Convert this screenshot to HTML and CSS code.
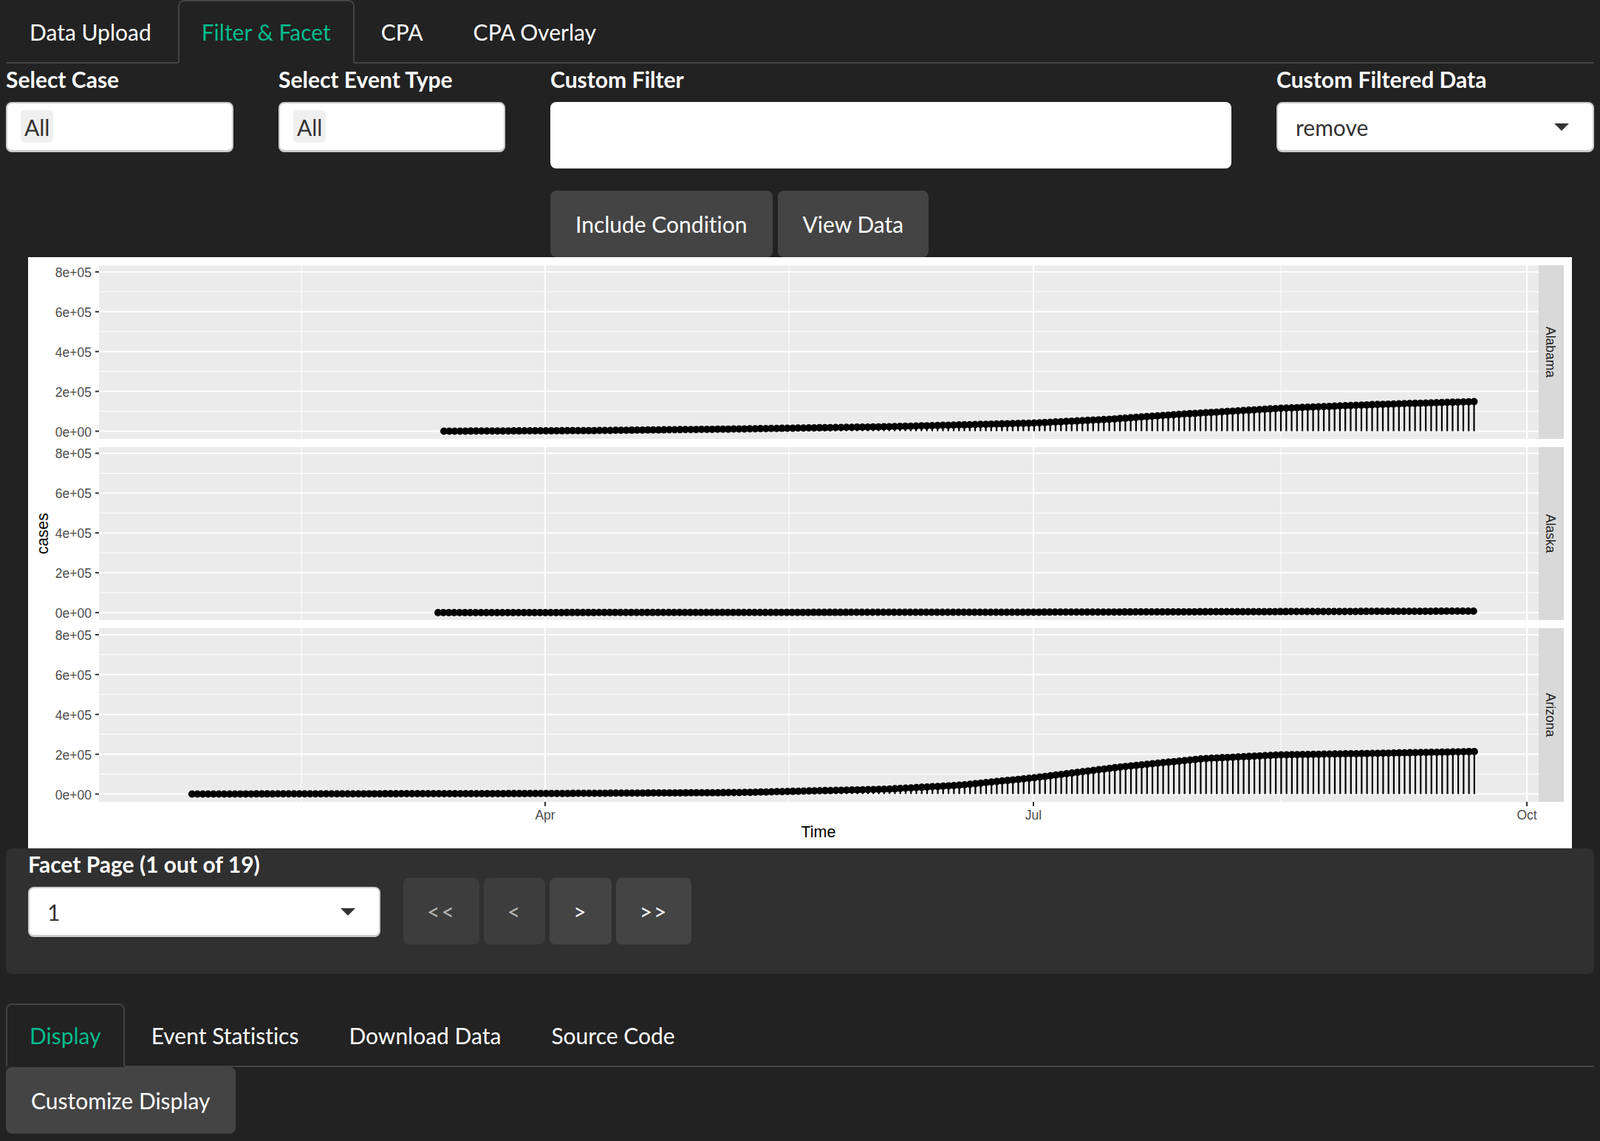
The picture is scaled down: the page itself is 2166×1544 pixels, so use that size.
FILE: index.html
```html
<!DOCTYPE html>
<html lang="en">

<head>
    <meta charset="UTF-8">
    <title>Event Explorer</title>
    <link rel="stylesheet" href="styles.css">
</head>

<body>
    <nav class="tabs">
        <a class="tab" href="#">Data Upload</a>
        <a class="tab active" href="#">Filter &amp; Facet</a>
        <a class="tab" href="#">CPA</a>
        <a class="tab" href="#">CPA Overlay</a>
    </nav>

    <div class="filters">
        <div>
            <label class="field-label">Select Case</label>
            <div class="input-box"><span class="chip">All</span></div>
        </div>
        <div>
            <label class="field-label">Select Event Type</label>
            <div class="input-box"><span class="chip">All</span></div>
        </div>
        <div>
            <label class="field-label">Custom Filter</label>
            <div class="text-box"></div>
            <div class="filter-actions">
                <button class="btn">Include Condition</button>
                <button class="btn">View Data</button>
            </div>
        </div>
        <div>
            <label class="field-label">Custom Filtered Data</label>
            <div class="input-box select-box">remove<span class="caret"></span></div>
        </div>
    </div>

    <div class="plot-wrap">
        <svg id="plot" class="plot" viewBox="38 348 2090 800" width="2090" height="800"></svg>
    </div>

    <div class="well">
        <div class="page-select">
            <label class="field-label">Facet Page (1 out of 19)</label>
            <div class="input-box select-box">1<span class="caret"></span></div>
        </div>
        <div class="pager">
            <button class="btn btn-page" disabled>&lt;&lt;</button>
            <button class="btn btn-page" disabled>&lt;</button>
            <button class="btn btn-page">&gt;</button>
            <button class="btn btn-page">&gt;&gt;</button>
        </div>
    </div>

    <nav class="tabs tabs-lower">
        <a class="tab active" href="#">Display</a>
        <a class="tab" href="#">Event Statistics</a>
        <a class="tab" href="#">Download Data</a>
        <a class="tab" href="#">Source Code</a>
    </nav>
    <button class="btn">Customize Display</button>

    <script src="script.js"></script>
</body>

</html>
```

FILE: styles.css
```css
html,
body {
    height: 1544px;
    overflow: hidden;
}

body {
    font-family: 'Lato', sans-serif;
    font-size: 30px;
    line-height: 43px;
    font-variant-ligatures: none;
    background-color: #222;
    color: #fff;
    margin: 0;
    padding: 0 8px;
}

.tabs {
    display: flex;
    gap: 4px;
    height: 84px;
    border-bottom: 2px solid #444;
}

.tab {
    color: #fff;
    text-decoration: none;
    padding: 20px 30px;
    height: 84px;
    box-sizing: border-box;
    border: 2px solid transparent;
    border-radius: 8px 8px 0 0;
}

.tab.active {
    color: #00bc8c;
    background-color: #222;
    border-color: #444;
    border-bottom-color: #222;
    height: 86px;
}

.filters {
    display: grid;
    grid-template-columns: 308px 307px 922px 430px;
    column-gap: 61px;
}

.field-label {
    display: block;
    font-weight: 700;
    margin-bottom: 9px;
}

.input-box {
    box-sizing: border-box;
    height: 68px;
    padding: 9px 18px 0;
    background-color: #fff;
    border: 2px solid #ccc;
    border-bottom-width: 3px;
    border-radius: 8px;
    color: #333;
    line-height: 47px;
    position: relative;
}

.chip {
    display: inline-block;
    padding: 0 5px;
    height: 44px;
    line-height: 47px;
    background-color: #efefef;
    border-radius: 6px;
}

.select-box {
    padding-left: 24px;
}

.caret {
    position: absolute;
    top: 27px;
    right: 32px;
    width: 0;
    height: 0;
    border-left: 10px solid transparent;
    border-right: 10px solid transparent;
    border-top: 10px solid #333;
}

.text-box {
    height: 90px;
    background-color: #fff;
    border-radius: 8px;
}

.filter-actions {
    display: flex;
    gap: 7px;
    margin-top: 30px;
}

.btn {
    display: block;
    font-family: inherit;
    font-size: 30px;
    line-height: 43px;
    font-variant-ligatures: none;
    height: 90px;
    padding: 0 34px;
    color: #fff;
    background-color: #444;
    border: 0;
    border-radius: 8px;
}

.plot-wrap {
    padding: 0 30px;
}

.plot {
    display: block;
    background-color: #fff;
}

.plot text {
    font-family: 'Liberation Sans', Arial, sans-serif;
}

.well {
    display: flex;
    gap: 31px;
    height: 170px;
    box-sizing: border-box;
    padding: 0 30px;
    background-color: #303030;
    border-radius: 8px;
}

.page-select {
    width: 477px;
}

.pager {
    display: flex;
    gap: 6px;
    margin-top: 40px;
}

.btn-page {
    padding: 0 32px;
    letter-spacing: 2px;
}

.btn-page:disabled {
    opacity: 0.65;
}

.tabs-lower {
    margin-top: 40px;
}
```

FILE: script.js
```js
// ggplot style facet chart, one panel per state
const NS = "http://www.w3.org/2000/svg";
const $plot = document.querySelector("#plot");

const PANEL_LEFT = 134;
const PANEL_RIGHT = 2083;
const STRIP_RIGHT = 2117;
const DAY_WIDTH = 7.263;
const LAST_X = 1995;
const STEP_Y = 53.9;

// curve is [x, pixels above zero], read off the original plot
const panels = [
    {
        name: "Alabama", top: 359, bottom: 594, zero: 583.5, firstX: 601,
        curve: [[601, 0], [800, 0.8], [1000, 3], [1200, 6], [1400, 11], [1500, 16], [1600, 23], [1734, 31], [1860, 36], [1995, 40]]
    },
    {
        name: "Alaska", top: 605, bottom: 839, zero: 829, firstX: 593,
        curve: [[593, 0], [1400, 0.6], [1995, 2]]
    },
    {
        name: "Arizona", top: 850, bottom: 1085, zero: 1074.5, firstX: 260,
        curve: [[260, 0], [738, 0.7], [1000, 2], [1200, 6.5], [1300, 12], [1400, 22], [1520, 37], [1631, 48], [1734, 53], [1860, 55], [1995, 57.5]]
    }
];

const xMajor = [[738, "Apr"], [1399, "Jul"], [2067, "Oct"]];
const xMinor = [408, 1068, 1734];
const yLabels = ["0e+00", "2e+05", "4e+05", "6e+05", "8e+05"];

function add(tag, attrs, text) {
    const el = document.createElementNS(NS, tag);
    Object.keys(attrs).forEach(key => el.setAttribute(key, attrs[key]));
    if (text) {
        el.textContent = text;
    }
    $plot.appendChild(el);
    return el;
}

function line(x1, y1, x2, y2, stroke, width) {
    add("line", { x1, y1, x2, y2, stroke, "stroke-width": width });
}

function heightAt(curve, x) {
    for (let i = 1; i < curve.length; i++) {
        if (x <= curve[i][0]) {
            const [x0, h0] = curve[i - 1];
            const [x1, h1] = curve[i];
            return h0 + (h1 - h0) * (x - x0) / (x1 - x0);
        }
    }
    return curve[curve.length - 1][1];
}

function drawGrid(panel) {
    add("rect", { x: PANEL_LEFT, y: panel.top, width: PANEL_RIGHT - PANEL_LEFT, height: panel.bottom - panel.top, fill: "#ebebeb" });

    yLabels.forEach((label, i) => {
        const y = panel.zero - i * STEP_Y;
        if (i < 4) {
            line(PANEL_LEFT, y - STEP_Y / 2, PANEL_RIGHT, y - STEP_Y / 2, "#fff", 1);
        }
        line(PANEL_LEFT, y, PANEL_RIGHT, y, "#fff", 2);
        line(129, y, PANEL_LEFT, y, "#333", 2);
        add("text", { x: 124, y: y + 7, "font-size": 17.5, "text-anchor": "end", fill: "#4d4d4d" }, label);
    });

    xMinor.forEach(x => line(x, panel.top, x, panel.bottom, "#fff", 1));
    xMajor.forEach(([x]) => line(x, panel.top, x, panel.bottom, "#fff", 2));

    add("rect", { x: PANEL_RIGHT, y: panel.top, width: STRIP_RIGHT - PANEL_RIGHT, height: panel.bottom - panel.top, fill: "#d9d9d9" });
    const midY = (panel.top + panel.bottom) / 2;
    add("text", {
        x: 2099, y: midY, "font-size": 17.5, "text-anchor": "middle", fill: "#1a1a1a",
        transform: `rotate(90 2099 ${midY})`, dy: 6
    }, panel.name);
}

function drawPoints(panel) {
    for (let x = panel.firstX; x <= LAST_X + 1; x += DAY_WIDTH) {
        const y = panel.zero - heightAt(panel.curve, x);
        line(x, panel.zero, x, y, "#000", 2.2);
    }
    for (let x = panel.firstX; x <= LAST_X + 1; x += DAY_WIDTH) {
        const y = panel.zero - heightAt(panel.curve, x);
        add("circle", { cx: x, cy: y, r: 5, fill: "#000" });
    }
}

panels.forEach(panel => {
    drawGrid(panel);
    drawPoints(panel);
});

xMajor.forEach(([x, label]) => {
    line(x, 1085, x, 1091, "#333", 2);
    add("text", { x, y: 1109, "font-size": 17.5, "text-anchor": "middle", fill: "#4d4d4d" }, label);
});

add("text", { x: 1108, y: 1133, "font-size": 21.5, "text-anchor": "middle", fill: "#000" }, "Time");
add("text", { x: 65, y: 722, "font-size": 21.5, "text-anchor": "middle", fill: "#000", transform: "rotate(-90 65 722)" }, "cases");
```
